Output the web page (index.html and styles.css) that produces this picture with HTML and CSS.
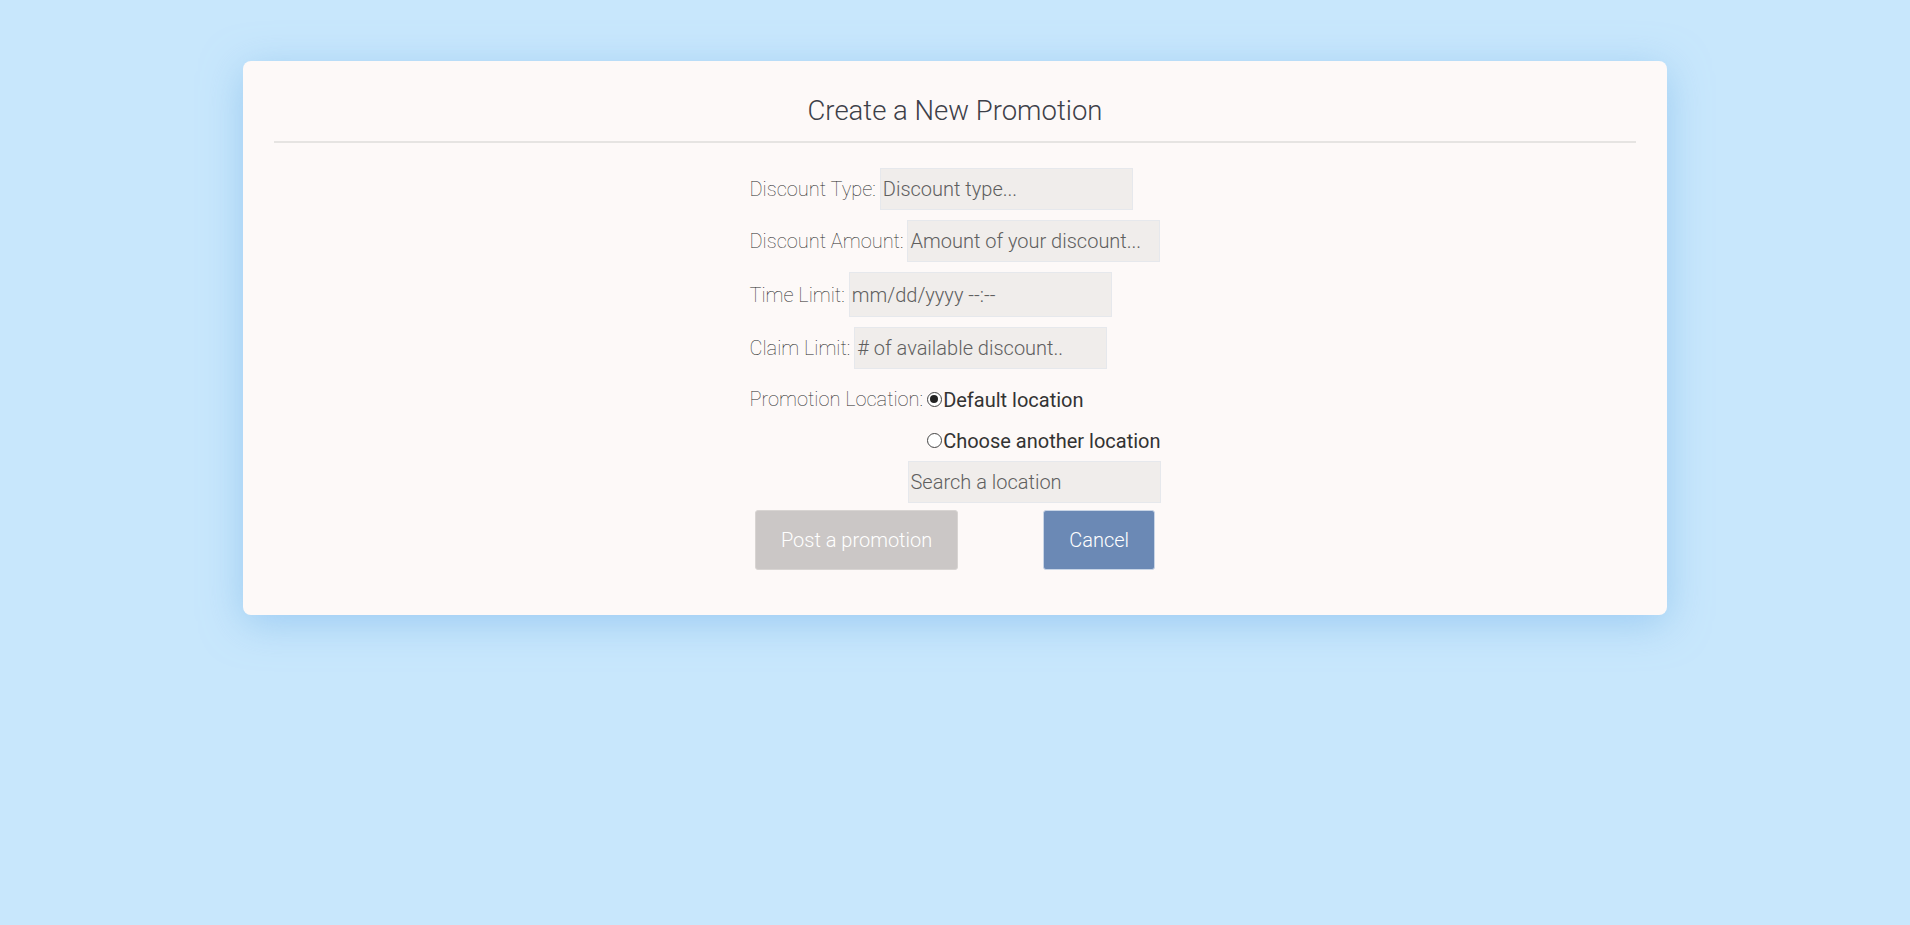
FILE: index.html
```html
<!DOCTYPE html>
<html lang="en">
<head>
<meta charset="utf-8">
<title>Create a New Promotion</title>
<link rel="stylesheet" href="styles.css">
</head>
<body>
<main class="page">
  <section class="card">
    <h1 class="card-title">Create a New Promotion</h1>
    <hr class="divider">
    <form class="promo-form">
      <div class="form-row">
        <label class="field-label" for="type">Discount Type:</label>
        <input class="field-input" id="type" type="text" placeholder="Discount type...">
      </div>
      <div class="form-row">
        <label class="field-label" for="amount">Discount Amount:</label>
        <input class="field-input" id="amount" type="text" placeholder="Amount of your discount...">
      </div>
      <div class="form-row">
        <label class="field-label" for="time">Time Limit:</label>
        <input class="field-input field-date" id="time" type="text" placeholder="mm/dd/yyyy --:--">
      </div>
      <div class="form-row">
        <label class="field-label" for="claim">Claim Limit:</label>
        <input class="field-input" id="claim" type="text" placeholder="# of available discount..">
      </div>
      <div class="form-row location-row">
        <span class="field-label">Promotion Location:</span>
        <div class="radio-group">
          <label class="radio-option"><input class="radio" type="radio" name="loc" checked>Default location</label>
          <label class="radio-option"><input class="radio" type="radio" name="loc">Choose another location</label>
        </div>
      </div>
      <input class="field-input search-input" type="text" placeholder="Search a location">
      <div class="actions">
        <button class="btn btn-post" type="button">Post a promotion</button>
        <button class="btn btn-cancel" type="button">Cancel</button>
      </div>
    </form>
  </section>
</main>
</body>
</html>
```
FILE: styles.css
```css
html, body {
  margin: 0;
  padding: 0;
}
body {
  background: #c8e7fc;
  font-family: Roboto, "Liberation Sans", sans-serif;
  min-height: 925px;
}
.page {
  padding-top: 61px;
}
.card {
  width: 1424px;
  margin: 0 auto;
  box-sizing: border-box;
  background: #fdf9f8;
  border-radius: 8px;
  padding: 32px 31px 45px;
  box-shadow: 0 8px 40px rgba(120, 180, 235, 0.55);
}
.card-title {
  margin: 0;
  text-align: center;
  font-weight: 300;
  font-size: 27.5px;
  line-height: 36px;
  color: #3d4048;
}
.divider {
  margin: 12px 0 0;
  border: 0;
  border-top: 2px solid #e6e4e2;
}
.promo-form {
  width: 411px;
  margin: 25px auto 0;
  display: flex;
  flex-direction: column;
  align-items: flex-start;
}
.form-row {
  display: flex;
  align-items: center;
  gap: 4px;
  margin-bottom: 10px;
}
.field-label {
  flex-shrink: 0;
  white-space: nowrap;
  font-size: 20px;
  font-weight: 100;
  color: #2a2a2a;
}
.field-input {
  flex-shrink: 0;
  width: 253px;
  height: 42px;
  box-sizing: border-box;
  border: 1px solid #e6e8ec;
  background: #f0edeb;
  font-family: Roboto, "Liberation Sans", sans-serif;
  font-size: 20px;
  font-weight: 300;
  padding: 0 2px;
  color: #333;
  outline: none;
}
.field-input::placeholder {
  color: #5f5f5f;
}
.field-date {
  width: 263px;
  height: 45px;
}
.location-row {
  align-items: flex-start;
  margin-bottom: 0;
}
.location-row .field-label {
  line-height: 41px;
}
.radio-group {
  display: flex;
  flex-direction: column;
  flex-shrink: 0;
}
.radio-option {
  display: flex;
  align-items: center;
  height: 41px;
  white-space: nowrap;
  font-size: 20px;
  color: #333;
}
.radio {
  flex-shrink: 0;
  appearance: none;
  -webkit-appearance: none;
  width: 15px;
  height: 15px;
  margin: 0 1px 0 0;
  border: 1.5px solid #444;
  border-radius: 50%;
  box-sizing: border-box;
  background: #fff;
  position: relative;
}
.radio:checked::after {
  content: "";
  position: absolute;
  left: 2px;
  top: 2px;
  width: 8px;
  height: 8px;
  border-radius: 50%;
  background: #222;
}
.search-input {
  align-self: flex-end;
}
.actions {
  align-self: center;
  display: flex;
  gap: 85px;
  margin-top: 7px;
}
.btn {
  height: 60px;
  padding: 0 25px;
  border: 1px solid transparent;
  border-radius: 3px;
  font-family: Roboto, "Liberation Sans", sans-serif;
  font-size: 20px;
  font-weight: 300;
  color: #fff;
}
.btn-post {
  background: #cbc7c6;
  border-color: #d8d4d2;
}
.btn-cancel {
  background: #6b89b5;
  border-color: #c9d5e6;
}
```
